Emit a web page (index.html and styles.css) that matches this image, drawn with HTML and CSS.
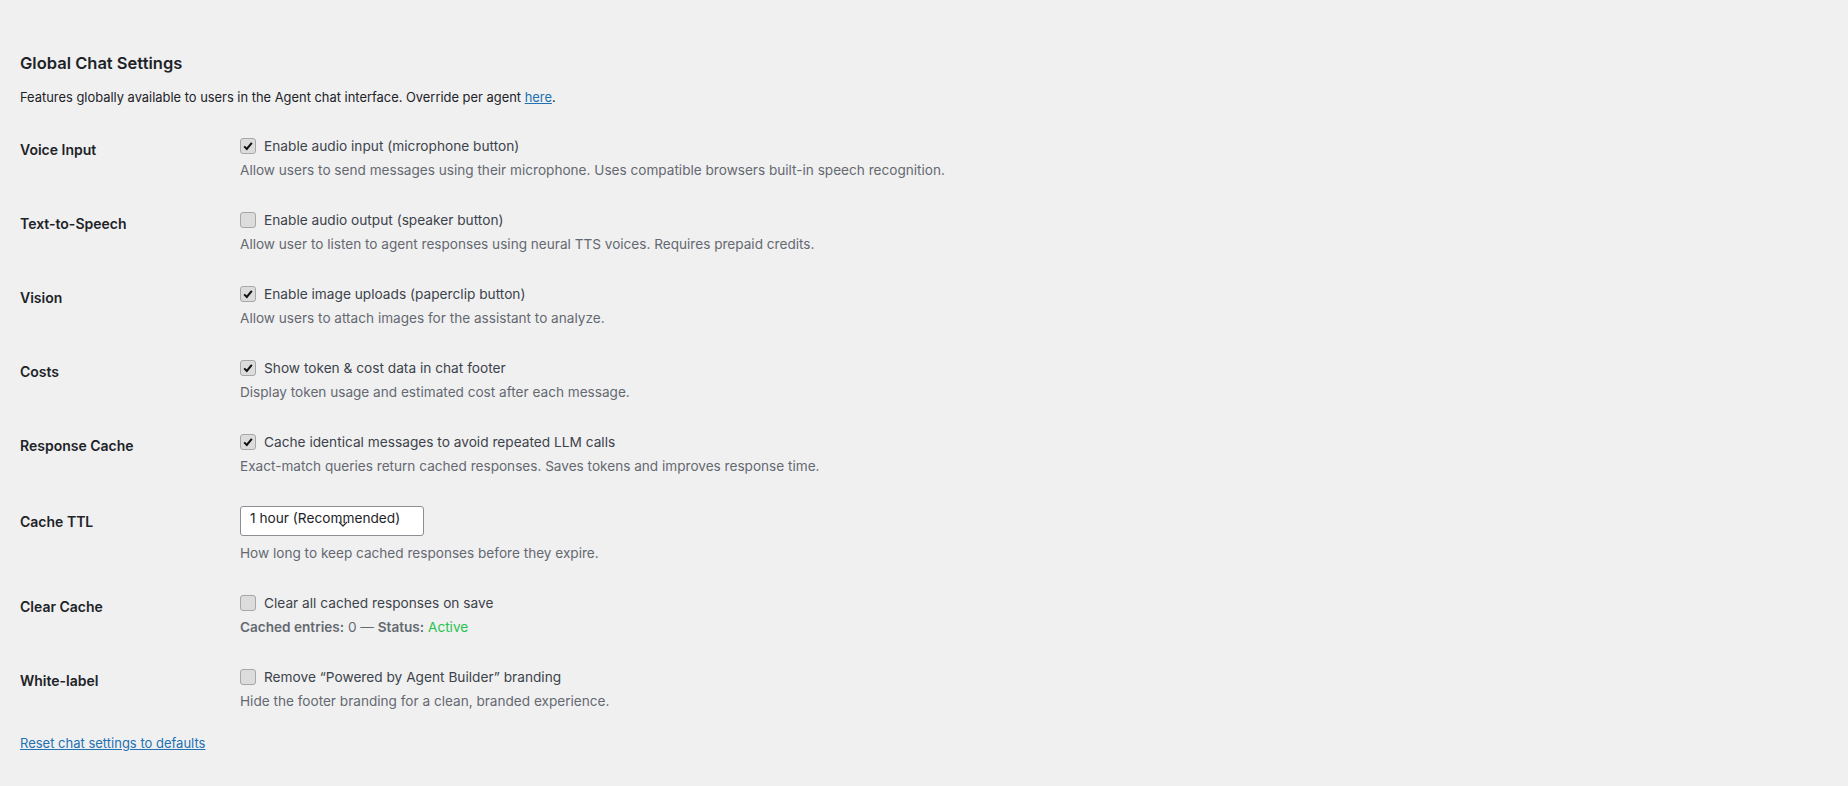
FILE: index.html
```html
<!DOCTYPE html>
<html>
  <head>
    <meta charset="utf-8">
    <title>Global Chat Settings</title>
    <link rel="stylesheet" href="styles.css">
  </head>
  <body>
  <div class="wrap">
    <h2 class="title">Global Chat Settings</h2>
    <p class="intro">Features globally available to users in the Agent chat interface. Override per agent <a href="#">here</a>.</p>

    <div class="form-table">
      <div class="row">
        <div class="th">Voice Input</div>
        <div class="td">
          <label class="check"><span class="box on"><svg viewBox="0 0 14 14" width="14" height="14"><path d="M3.2 7.4 L5.8 10 L10.8 3.8" fill="none" stroke="#111" stroke-width="2"/></svg></span>Enable audio input (microphone button)</label>
          <p class="description">Allow users to send messages using their microphone. Uses compatible browsers built-in speech recognition.</p>
        </div>
      </div>

      <div class="row">
        <div class="th">Text-to-Speech</div>
        <div class="td">
          <label class="check"><span class="box"></span>Enable audio output (speaker button)</label>
          <p class="description">Allow user to listen to agent responses using neural TTS voices. Requires prepaid credits.</p>
        </div>
      </div>

      <div class="row">
        <div class="th">Vision</div>
        <div class="td">
          <label class="check"><span class="box on"><svg viewBox="0 0 14 14" width="14" height="14"><path d="M3.2 7.4 L5.8 10 L10.8 3.8" fill="none" stroke="#111" stroke-width="2"/></svg></span>Enable image uploads (paperclip button)</label>
          <p class="description">Allow users to attach images for the assistant to analyze.</p>
        </div>
      </div>

      <div class="row">
        <div class="th">Costs</div>
        <div class="td">
          <label class="check"><span class="box on"><svg viewBox="0 0 14 14" width="14" height="14"><path d="M3.2 7.4 L5.8 10 L10.8 3.8" fill="none" stroke="#111" stroke-width="2"/></svg></span>Show token &amp; cost data in chat footer</label>
          <p class="description">Display token usage and estimated cost after each message.</p>
        </div>
      </div>

      <div class="row">
        <div class="th">Response Cache</div>
        <div class="td">
          <label class="check"><span class="box on"><svg viewBox="0 0 14 14" width="14" height="14"><path d="M3.2 7.4 L5.8 10 L10.8 3.8" fill="none" stroke="#111" stroke-width="2"/></svg></span>Cache identical messages to avoid repeated LLM calls</label>
          <p class="description">Exact-match queries return cached responses. Saves tokens and improves response time.</p>
        </div>
      </div>

      <div class="row">
        <div class="th ttl">Cache TTL</div>
        <div class="td">
          <div class="select">1 hour (Recommended)<svg class="chev" viewBox="0 0 10 6" width="10" height="6"><path d="M1 1 L5 5 L9 1" fill="none" stroke="#333" stroke-width="1.3"/></svg></div>
          <p class="description sel">How long to keep cached responses before they expire.</p>
        </div>
      </div>

      <div class="row">
        <div class="th">Clear Cache</div>
        <div class="td">
          <label class="check"><span class="box"></span>Clear all cached responses on save</label>
          <p class="description"><b>Cached entries:</b> 0 &mdash; <b>Status:</b> <span class="active">Active</span></p>
        </div>
      </div>

      <div class="row">
        <div class="th">White-label</div>
        <div class="td">
          <label class="check"><span class="box"></span>Remove &ldquo;Powered by Agent Builder&rdquo; branding</label>
          <p class="description">Hide the footer branding for a clean, branded experience.</p>
        </div>
      </div>
    </div>

    <p class="reset"><a href="#">Reset chat settings to defaults</a></p>
  </div>
  </body>
</html>
```

FILE: styles.css
```css
html, body { margin: 0; padding: 0; background: #f0f0f1; }
body { font-family: Inter, "Noto Sans", "Liberation Sans", sans-serif; font-size: 13px; color: #3c434a; }
a { color: #2271b1; text-decoration: underline; }

.wrap { padding: 50px 20px 0 20px; }

.title { margin: 0; font-size: 16.5px; font-weight: 600; color: #1d2327; line-height: 26px; }
.intro { margin: 12px 0 0 0; font-size: 12.9px; line-height: 20px; color: #1d2327; }

.form-table { margin-top: 13px; }
.row { display: grid; grid-template-columns: 210px 1fr; }
.th { padding: 20px 10px 20px 0; font-size: 14px; font-weight: 600; line-height: 18px; color: #1d2327; }
.th.ttl { padding-top: 22px; }
.td { padding: 15px 10px 14px 10px; font-size: 13.7px; }

.check { display: flex; align-items: center; line-height: 20px; color: #3c434a; }
.box { display: inline-flex; align-items: center; justify-content: center; width: 14px; height: 14px; margin-right: 8px; border: 1px solid #a7a7a7; border-radius: 3px; background: #dcdcdc; }

.description { margin: 4px 0 0 0; font-size: 13.6px; line-height: 21px; color: #646970; }
.description b { font-weight: 600; }
.description.sel { margin-top: 7px; }
.active { color: #27c24c; }

.select { position: relative; box-sizing: border-box; width: 184px; height: 30px; padding: 1px 8px 0 9px; line-height: 20px; border: 1px solid #8c8f94; border-radius: 3px; background: #fff; color: #1d2327; }
.chev { position: absolute; left: 97px; top: 14px; }

.reset { margin: 7px 0 0 0; font-size: 13px; line-height: 20px; }
```
